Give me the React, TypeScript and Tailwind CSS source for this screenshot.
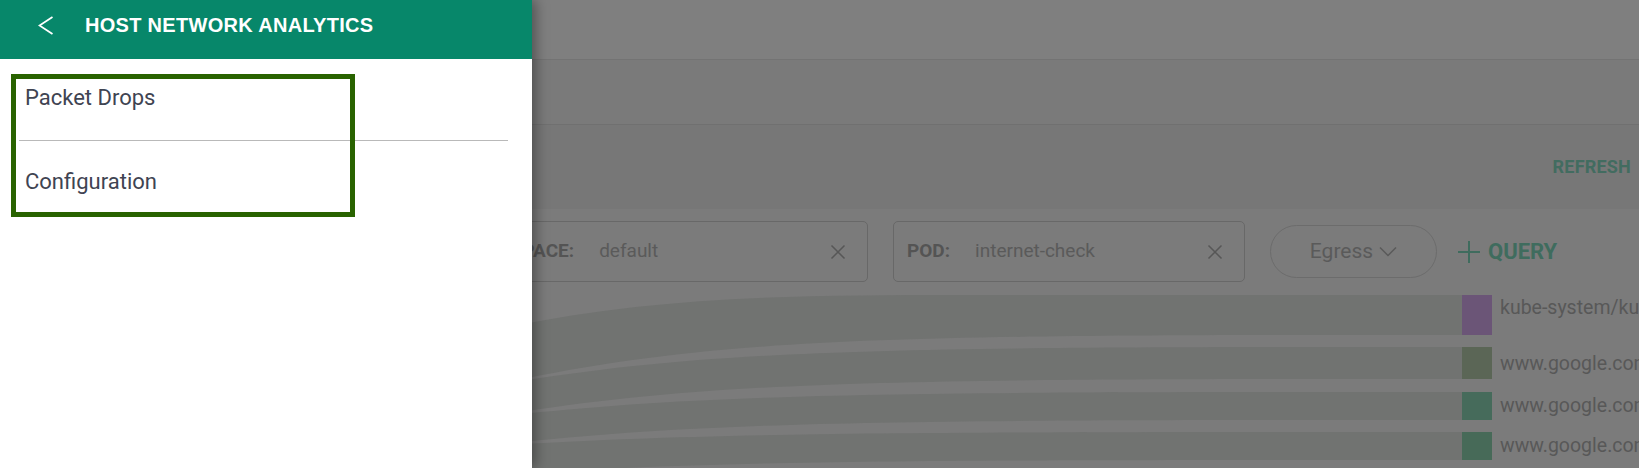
import React from "react";

function XIcon() {
  return (
    <svg width="16" height="16" viewBox="0 0 16 16" className="ml-auto shrink-0">
      <path d="M1.5 1.5 L14.5 14.5 M14.5 1.5 L1.5 14.5" stroke="#575757" strokeWidth="1.5" fill="none" />
    </svg>
  );
}

function bandPath(tL: number, tR: number, bL: number, bR: number) {
  return `M500,${tL} C720,${tR} 920,${tR} 1462,${tR} L1462,${bR} C920,${bR} 720,${bR} 500,${bL} Z`;
}

const nodes = [
  { y: 295, h: 40, ly: 307, color: "#6b5577", label: "kube-system/kube-dns" },
  { y: 347, h: 32, ly: 363, color: "#5b6656", label: "www.google.com" },
  { y: 392, h: 28, ly: 405, color: "#466b5b", label: "www.google.com" },
  { y: 432, h: 28, ly: 445, color: "#476a58", label: "www.google.com" },
];

export default function App() {
  return (
    <div className="relative w-[1639px] h-[468px] overflow-hidden bg-[#7b7b7b] font-['Roboto',sans-serif]">
      {/* dimmed page underneath */}
      <div className="flex flex-col h-full">
        <div className="h-[60px] shrink-0 bg-[#7f7f7f] border-b border-[#737373]" />
        <div className="h-[65px] shrink-0 bg-[#7a7a7a] border-b border-[#707070]" />
        <div className="h-[84px] shrink-0 bg-[#777777] flex items-center justify-end pr-[8px]">
          <span className="text-[18px] leading-[22px] font-bold tracking-[0.2px] text-[#426c60]">REFRESH</span>
        </div>
        <div className="flex-1 flex flex-col">
          <div className="flex items-center pt-[12px] pl-[443px]">
            <div className="w-[425px] h-[61px] shrink-0 rounded-[5px] border border-[#686868] flex items-center pl-[13px] pr-[21px]">
              <span className="font-bold text-[19px] text-[#545454]">NAMESPACE:</span>
              <span className="ml-[25px] text-[19px] text-[#5a5a5a]">default</span>
              <XIcon />
            </div>
            <div className="ml-[25px] w-[352px] h-[61px] shrink-0 rounded-[5px] border border-[#686868] flex items-center pl-[13px] pr-[21px]">
              <span className="font-bold text-[19px] text-[#545454]">POD:</span>
              <span className="ml-[25px] text-[19px] text-[#5a5a5a]">internet-check</span>
              <XIcon />
            </div>
            <div className="ml-[25px] w-[167px] h-[53px] shrink-0 rounded-full border border-[#6c6c6c] flex items-center justify-center gap-[6px]">
              <span className="text-[21px] text-[#5a5a5a]">Egress</span>
              <svg width="18" height="11" viewBox="0 0 18 11">
                <path d="M1 1.5 L9 9.5 L17 1.5" stroke="#5a5a5a" strokeWidth="1.5" fill="none" />
              </svg>
            </div>
            <div className="ml-[21px] flex items-center gap-[8px]">
              <svg width="22" height="22" viewBox="0 0 22 22">
                <path d="M11 0 V22 M0 11 H22" stroke="#3f6c5e" strokeWidth="2" fill="none" />
              </svg>
              <span className="text-[22px] font-bold text-[#3f6c5e]">QUERY</span>
            </div>
          </div>
          <svg width="1639" height="186" viewBox="0 282 1639 186" className="block shrink-0">
            <path d="M500,329 C650,296 800,295 960,295 L1462,295 L1462,335 C920,335 720,335 500,384 Z" fill="#717371" />
            <path d={bandPath(384.7, 347, 415.5, 379)} fill="#717371" />
            <path d={bandPath(416.4, 392, 444.4, 420)} fill="#717371" />
            <path d={bandPath(445.3, 432, 475, 460)} fill="#717371" />
            {nodes.map((n, i) => (
              <g key={i}>
                <rect x="1462" y={n.y} width="30" height={n.h} fill={n.color} />
                <text
                  x="1500"
                  y={n.ly}
                  dy="0.35em"
                  fontSize="19.5"
                  fill="#585858"
                  fontFamily="Roboto, sans-serif"
                >
                  {n.label}
                </text>
              </g>
            ))}
          </svg>
        </div>
      </div>

      {/* drawer */}
      <div className="absolute left-0 top-0 h-full w-[532px] bg-white shadow-[4px_0_12px_rgba(0,0,0,0.35)] flex flex-col">
        <div className="h-[59px] shrink-0 bg-[#07876a] flex items-center pb-[9px]">
          <svg width="16" height="20" viewBox="0 0 16 20" className="ml-[38px] shrink-0">
            <path d="M14.5 2 L1.5 10.5 L14.5 19" stroke="#ffffff" strokeWidth="1.8" fill="none" />
          </svg>
          <span className="ml-[31px] font-['Liberation_Sans',Arial,sans-serif] font-bold text-[20px] leading-[24px] tracking-[0.3px] text-white">
            HOST NETWORK ANALYTICS
          </span>
        </div>
        <div className="ml-[19px] mr-[24px] pt-[27px]">
          <div className="border-b border-[#b9b9b9] pb-[30px] pl-[6px] text-[22px] leading-[24px] text-[#3f4452]">
            Packet Drops
          </div>
          <div className="pt-[29px] pl-[6px] text-[22px] leading-[24px] text-[#3f4452]">Configuration</div>
        </div>
      </div>

      {/* highlight annotation */}
      <div className="absolute left-[11px] top-[74px] w-[344px] h-[143px] border-[5px] border-[#296300]" />
    </div>
  );
}
